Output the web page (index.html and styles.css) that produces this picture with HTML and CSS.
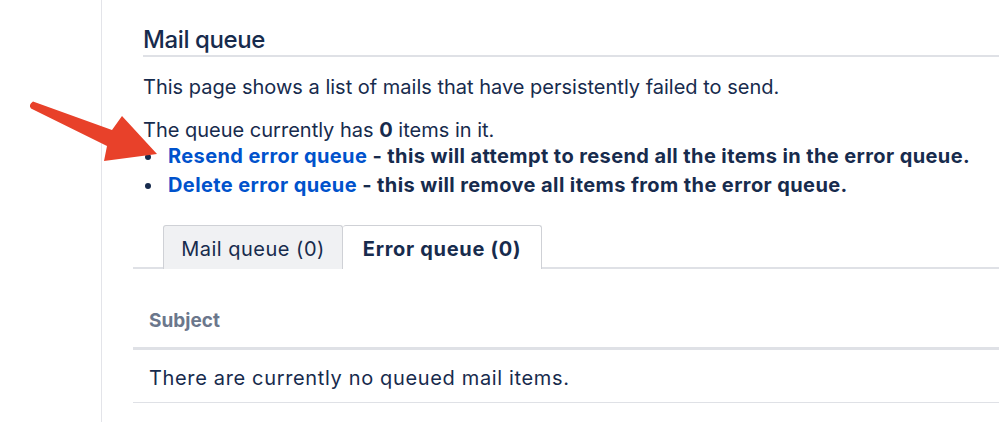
FILE: index.html
```html
<!DOCTYPE html>
<html>
<head>
<meta charset="utf-8">
<link rel="stylesheet" href="styles.css">
</head>
<body>
<div class="page">
  <aside class="sidebar"></aside>
  <main class="main">
    <h2 class="title">Mail queue</h2>
    <p class="intro">This page shows a list of mails that have persistently failed to send.</p>
    <p class="status">The queue currently has <b>0</b> items in it.</p>
    <ul class="actions">
      <li><a href="#">Resend error queue</a> - this will attempt to resend all the items in the error queue.</li>
      <li><a href="#">Delete error queue</a> - this will remove all items from the error queue.</li>
    </ul>
    <div class="tabs">
      <div class="tab">Mail queue (0)</div>
      <div class="tab active">Error queue (0)</div>
    </div>
    <div class="table">
      <div class="thead">Subject</div>
      <div class="row">There are currently no queued mail items.</div>
    </div>
  </main>
  <svg class="arrow" width="170" height="170" viewBox="0 0 170 170">
    <path d="M33 101.5 L112 130 L122 116 L157 154 L104 161 L107 146 L31 108.5 Q28 105 33 101.5 Z" fill="#e8412a"/>
  </svg>
</div>
</body>
</html>
```
FILE: styles.css
```css
html, body {
  margin: 0;
  padding: 0;
  background: #fff;
}
body {
  font-family: Inter, "Noto Sans", "Liberation Sans", sans-serif;
  color: #172b4d;
  font-size: 20px;
}
.page {
  display: flex;
  height: 422px;
  overflow: hidden;
  position: relative;
}
.sidebar {
  width: 101px;
  flex: none;
  border-right: 1px solid #e3e4e9;
}
.main {
  flex: 1;
  padding-left: 31px;
}
.title {
  margin: 26px 0 0 10px;
  padding-bottom: 2px;
  font-size: 24px;
  font-weight: 500;
  line-height: 27px;
  border-bottom: 2px solid #dfe1e6;
  letter-spacing: -0.4px;
}
.intro {
  margin: 18px 0 0 10px;
  line-height: 24px;
}
.status {
  margin: 19px 0 0 10px;
  line-height: 24px;
}
.status b {
  font-weight: 700;
}
.actions {
  margin: 0 0 0 10px;
  padding-left: 25px;
  font-weight: 700;
  line-height: 29px;
  list-style: none;
  letter-spacing: 0.4px;
}
.actions li {
  position: relative;
}
.actions li::before {
  content: "";
  position: absolute;
  left: -23px;
  top: 12px;
  width: 6px;
  height: 6px;
  border-radius: 50%;
  background: #172b4d;
}
.actions a {
  color: #0052cc;
  text-decoration: none;
}
.tabs {
  display: flex;
  margin-top: 25px;
  padding-left: 30px;
  border-bottom: 2px solid #dfe1e6;
  height: 42px;
}
.tab {
  box-sizing: border-box;
  height: 44px;
  width: 180px;
  justify-content: center;
  display: flex;
  align-items: center;
  padding-top: 2px;
  border: 1px solid #cfd1d6;
  border-bottom: none;
  border-radius: 3px 3px 0 0;
  background: #f0f1f3;
  color: #172b4d;
  letter-spacing: 0.5px;
}
.tab.active {
  width: 199px;
  background: #fff;
  font-weight: 700;
  border-left: none;
  position: relative;
  letter-spacing: 0.7px;
}
.thead {
  padding: 41px 0 15px 16px;
  font-size: 19px;
  font-weight: 700;
  color: #6b778c;
  line-height: 22px;
  border-bottom: 3px solid #dfe1e6;
}
.row {
  padding: 16px 0 12px 16px;
  line-height: 24px;
  letter-spacing: 0.65px;
  border-bottom: 1px solid #dfe1e6;
}
.arrow {
  position: absolute;
  left: 0;
  top: 0;
}
```
